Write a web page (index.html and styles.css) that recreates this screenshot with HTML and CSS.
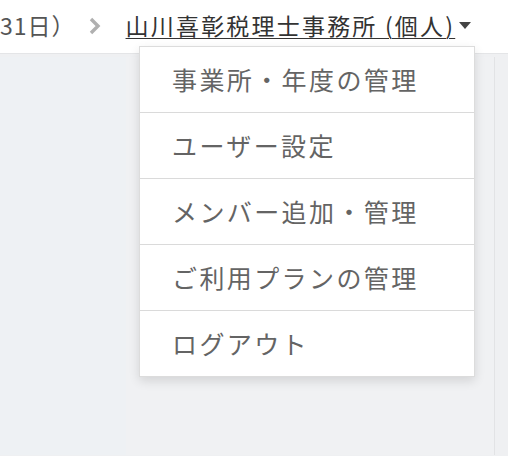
FILE: index.html
```html
<!DOCTYPE html>
<html lang="ja">
<head>
<meta charset="utf-8">
<link rel="stylesheet" href="styles.css">
</head>
<body>
<header class="topbar">
  <span class="crumb-prev">31日）</span>
  <svg class="crumb-sep" width="14" height="18" viewBox="0 0 14 18"><polyline points="3,2 10,9 3,16" fill="none" stroke="#b0b0b0" stroke-width="3.4"/></svg>
  <a class="office" href="#">山川喜彰税理士事務所 (個人)</a>
  <span class="caret"></span>
</header>
<main class="content">
  <div class="side"></div>
  <div class="panel"></div>
</main>
<ul class="menu">
  <li class="menu-item">事業所・年度の管理</li>
  <li class="menu-item">ユーザー設定</li>
  <li class="menu-item">メンバー追加・管理</li>
  <li class="menu-item">ご利用プランの管理</li>
  <li class="menu-item">ログアウト</li>
</ul>
</body>
</html>
```
FILE: styles.css
```css
html, body {
  margin: 0;
  padding: 0;
  height: 100%;
}
body {
  background: #eff0f2;
  font-family: "Noto Sans CJK JP", "Noto Sans", sans-serif;
  overflow: hidden;
  position: relative;
}
.topbar {
  height: 54px;
  background: #ffffff;
  border-bottom: 1px solid #e4e5e7;
  display: flex;
  align-items: center;
  box-sizing: border-box;
  font-size: 23px;
  white-space: nowrap;
  padding-bottom: 4px;
}
.crumb-prev {
  color: #555;
  letter-spacing: 1px;
}
.crumb-sep {
  margin-left: 12px;
  margin-right: 24px;
  margin-top: 2px;
}
.office {
  color: #333;
  letter-spacing: 2.2px;
  text-decoration: underline;
  text-underline-offset: 3px;
  text-decoration-thickness: 1px;
}
.caret {
  width: 0;
  height: 0;
  border-left: 6px solid transparent;
  border-right: 6px solid transparent;
  border-top: 7px solid #444;
  margin-left: 4px;
  margin-top: 2px;
}
.content {
  display: flex;
  height: calc(100% - 58px);
  margin-top: 3px;
}
.side {
  width: 126px;
  background: #eef1f4;
}
.panel {
  width: 368px;
  background: #f0f1f3;
  border-right: 1px solid #e2e3e5;
}
.menu {
  position: absolute;
  left: 139px;
  top: 46px;
  width: 336px;
  margin: 0;
  padding: 0;
  list-style: none;
  background: #fff;
  border: 1px solid #dcdcdc;
  box-sizing: border-box;
  box-shadow: 0 4px 10px rgba(0, 0, 0, 0.12);
}
.menu-item {
  height: 66px;
  box-sizing: border-box;
  display: flex;
  align-items: center;
  padding-left: 32px;
  padding-bottom: 2px;
  font-size: 25px;
  letter-spacing: 2.4px;
  color: #646464;
  border-top: 1px solid #dadada;
}
.menu-item:first-child {
  border-top: none;
  height: 65px;
}
```
